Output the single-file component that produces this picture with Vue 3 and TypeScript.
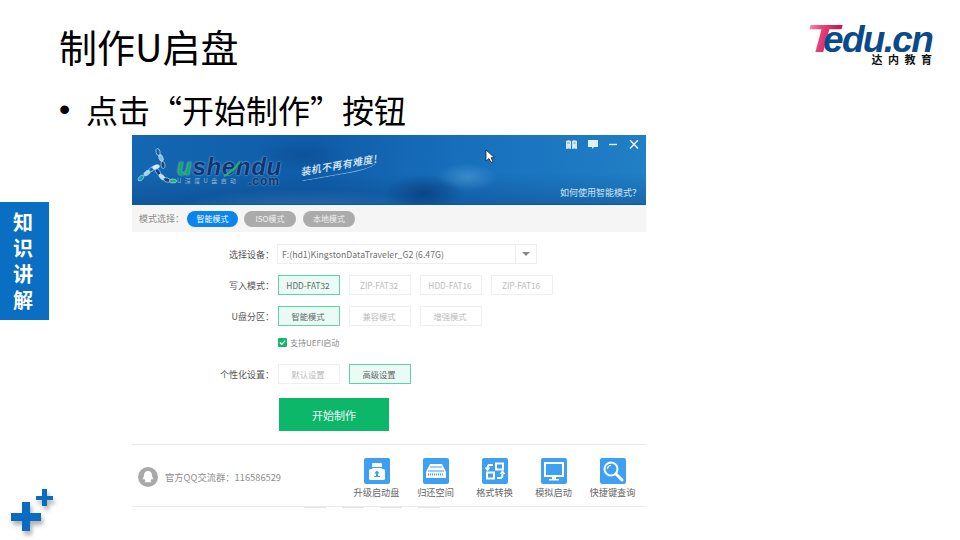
<script setup lang="ts">
interface Choice { text: string; on?: boolean }
interface Row { label: string; choices: Choice[] }
interface Bead { x: number; y: number; r: number; c: string }
const modes: Choice[] = [{ text: '智能模式', on: true }, { text: 'ISO模式' }, { text: '本地模式' }]
const writeRow: Row = { label: '写入模式：', choices: [{ text: 'HDD-FAT32', on: true }, { text: 'ZIP-FAT32' }, { text: 'HDD-FAT16' }, { text: 'ZIP-FAT16' }] }
const partRow: Row = { label: 'U盘分区：', choices: [{ text: '智能模式', on: true }, { text: '兼容模式' }, { text: '增强模式' }] }
const personalRow: Row = { label: '个性化设置：', choices: [{ text: '默认设置' }, { text: '高级设置', on: true }] }
const tools: string[] = ['升级启动盘', '归还空间', '格式转换', '模拟启动', '快捷键查询']
const beads: Bead[] = [
  { x: 21, y: 5, r: 75, c: '#1b5f9e' }, { x: 24, y: 11, r: 70, c: '#7cc0e6' }, { x: 26, y: 18, r: 85, c: '#14497f' },
  { x: 4, y: 31, r: -45, c: '#17a0a4' }, { x: 10, y: 26, r: -40, c: '#9fd6ee' }, { x: 15, y: 22, r: -35, c: '#1570a8' }, { x: 19, y: 20, r: -20, c: '#d3ecf8' },
  { x: 21, y: 25, r: 55, c: '#123f74' }, { x: 25, y: 30, r: 45, c: '#bfe2f4' }, { x: 30, y: 33, r: 20, c: '#123f74' }, { x: 36, y: 34, r: 0, c: '#1cb36a' }
]
const beadTransform = (b: Bead): string => `translate(${b.x} ${b.y}) rotate(${b.r})`
</script>

<template>
  <div class="slide">
    <header class="top">
      <h1 class="title">制作U启盘</h1>
      <div class="brand">
        <div class="brand-word"><span class="brand-t">T</span><span class="brand-rest">edu.cn</span></div>
        <div class="brand-cn">达内教育</div>
      </div>
    </header>
    <p class="bullet"><span class="dot">•</span>点击“开始制作”按钮</p>

    <div class="stage">
      <aside class="rail">
        <div class="tab"><span>知</span><span>识</span><span>讲</span><span>解</span></div>
        <svg class="plus" width="46" height="44" viewBox="0 0 46 44">
          <g fill="#0a6cc0">
            <path d="M12 14h8v11h11v8H20v10h-8V33H1v-8h11z" />
            <path d="M32 1h5v7h6v4h-6v6h-5v-6h-6V8h6z" />
          </g>
        </svg>
      </aside>

      <section class="app">
        <div class="banner">
          <div class="logo">
            <svg class="logo-mark" width="44" height="42" viewBox="0 0 44 42">
              <ellipse v-for="(b, i) in beads" :key="i" :transform="beadTransform(b)" rx="3.600" ry="2" :fill="b.c" stroke="#cfe8f6" stroke-width=".6" />
            </svg>
            <div class="logo-text">
              <div class="logo-word"><span class="logo-u">u</span>shendu</div>
              <div class="logo-sub"><span>U深度U盘启动</span><b>.com</b></div>
            </div>
          </div>
          <svg class="swoosh" width="20" height="18" viewBox="0 0 20 18"><path d="M2 16C8 14 13 8 18 2" stroke="#23b06a" stroke-width="2" fill="none" /></svg>
          <div class="slogan">装机不再有难度!</div>
          <svg class="cursor" width="10" height="15" viewBox="0 0 10 15">
            <path d="M1 1v11l3-2.500 2 4 2-1-2-3.800h3.500z" fill="#fff" stroke="#222" stroke-width=".8" />
          </svg>
          <div class="win">
            <svg width="11" height="9" viewBox="0 0 11 9"><path d="M0 1q3-1.500 5 0v8q-2-1-5 0zM6 1q2-1.500 5 0v8q-3-1-5 0z" fill="#d6e8f5" /><path d="M1 3h3M7 3h3" stroke="#5d9ccc" stroke-width=".8" /></svg>
            <svg width="10" height="9" viewBox="0 0 10 9"><path d="M0 0h10v7H6L4.500 9 4 7H0z" fill="#e2f0fa" /></svg>
            <svg width="9" height="9" viewBox="0 0 9 9"><path d="M0 4.500h8" stroke="#e2f0fa" stroke-width="1.400" /></svg>
            <svg width="10" height="9" viewBox="0 0 10 9"><path d="M1 0l8 8.500M9 0L1 8.500" stroke="#f2f8fc" stroke-width="1.400" /></svg>
          </div>
          <a class="howto">如何使用智能模式？</a>
        </div>

        <div class="modebar">
          <span class="modebar-label">模式选择：</span>
          <span v-for="m in modes" :key="m.text" class="pill" :class="{ 'pill-on': m.on }">{{ m.text }}</span>
        </div>

        <div class="form">
          <div class="row row-device">
            <label class="lab">选择设备：</label>
            <div class="select">
              <span class="select-text">F:(hd1)KingstonDataTraveler_G2 (6.47G)</span>
              <span class="select-arrow"><i></i></span>
            </div>
          </div>
          <div class="row row-write">
            <label class="lab">{{ writeRow.label }}</label>
            <span v-for="c in writeRow.choices" :key="c.text" class="opt" :class="{ 'opt-on': c.on }">{{ c.text }}</span>
          </div>
          <div class="row row-part">
            <label class="lab">{{ partRow.label }}</label>
            <span v-for="c in partRow.choices" :key="c.text" class="opt" :class="{ 'opt-on': c.on }">{{ c.text }}</span>
          </div>
          <div class="uefi">
            <svg width="9" height="9" viewBox="0 0 10 10"><rect width="10" height="10" rx="1.500" fill="#12b76a" /><path d="M2 5l2.200 2.200L8 3" stroke="#fff" stroke-width="1.300" fill="none" /></svg>
            <span>支持UEFI启动</span>
          </div>
          <div class="row row-personal">
            <label class="lab">{{ personalRow.label }}</label>
            <span v-for="c in personalRow.choices" :key="c.text" class="opt" :class="{ 'opt-on': c.on }">{{ c.text }}</span>
          </div>
          <button class="start">开始制作</button>
        </div>

        <div class="foot">
          <div class="qq">
            <span class="qq-badge">
              <svg width="20" height="20" viewBox="0 0 20 20">
                <circle cx="10" cy="10" r="10" fill="#a9a9a9" />
                <path d="M10 4c-2.700 0-4 2-4 4.500 0 1-1 2.500-1.300 4 .5.300 1.200-.3 1.500-.8.300 1 1 1.800 1.500 2.300-.7.300-1.200.6-1 1 .6.300 3 .3 3.300 0 .3.300 2.700.3 3.300 0 .2-.4-.3-.7-1-1 .5-.5 1.200-1.300 1.500-2.300.3.500 1 1.100 1.500.8-.3-1.500-1.300-3-1.300-4C14 6 12.700 4 10 4z" fill="#fff" />
              </svg>
            </span>
            <span class="qq-text">官方QQ交流群：116586529</span>
          </div>
          <div class="tools">
            <div v-for="(t, i) in tools" :key="t" class="tool">
              <span class="tool-icon">
                <svg width="26" height="26" viewBox="0 0 26 26">
                  <rect width="26" height="26" rx="2" fill="#3f9ff0" />
                  <g v-if="i === 0" fill="#fff">
                    <rect x="8" y="5" width="10" height="6" rx="1" />
                    <path d="M8 9h10v1H8z" fill="#3f9ff0" />
                    <rect x="5" y="11" width="16" height="11" rx="1.500" />
                    <path d="M13 12.500l2.500 3h-1.500v2.500h2v1h-6v-1h2v-2.500H10z" fill="#3f9ff0" />
                  </g>
                  <g v-else-if="i === 1">
                    <path d="M7 6h12l4 8v6H3v-6z" fill="#fff" />
                    <path d="M7 9h12M5 13h16" stroke="#3f9ff0" stroke-width="1" />
                    <path d="M5 16.500h16" stroke="#3f9ff0" stroke-width="2" stroke-dasharray="1 1" />
                  </g>
                  <g v-else-if="i === 2" fill="none" stroke="#fff" stroke-width="2">
                    <rect x="14" y="5.500" width="7" height="6" />
                    <rect x="5" y="14.500" width="7" height="6" />
                    <path d="M11 7H7.500C6 7 5.500 8 5.500 11M15 20h3.500c1.500 0 2-1 2-4.500" />
                    <path d="M3.500 9.500l2 2.500 2-2.500M18.500 16l2-2.500 2 2.500" stroke-width="1.500" />
                  </g>
                  <g v-else-if="i === 3" fill="#fff">
                    <path d="M3 4h20v15H3zM5 6v11h16V6z" fill-rule="evenodd" />
                    <rect x="11" y="19" width="4" height="2" />
                    <rect x="8" y="21" width="10" height="1.500" />
                  </g>
                  <g v-else fill="none" stroke="#fff">
                    <circle cx="11" cy="11" r="6.500" stroke-width="2" />
                    <path d="M7.500 11c0-2 1.500-3.500 3.500-3.500" stroke-width="1.200" />
                    <path d="M16 16l6 6" stroke-width="3" stroke-linecap="round" />
                  </g>
                </svg>
              </span>
              <span class="tool-label">{{ t }}</span>
            </div>
          </div>
        </div>
        <div class="trace"><i></i><i></i><i></i><i></i></div>
      </section>
    </div>
  </div>
</template>

<style>
html, body { margin: 0; background: #fff; }
</style>

<style scoped>
.slide {
  width: 960px;
  height: 540px;
  overflow: hidden;
  background: #fff;
  color: #000;
  font-family: "Noto Sans CJK SC", "Noto Sans", sans-serif;
  display: flex;
  flex-direction: column;
}
.top {
  display: flex;
  justify-content: space-between;
  align-items: flex-start;
  height: 87px;
  padding: 0 28px 0 59px;
  flex: none;
}
.title {
  margin: 19px 0 0;
  font-size: 38px;
  font-weight: 400;
  line-height: 54px;
  letter-spacing: 0;
}
.brand {
  margin-top: 25px;
  width: 128px;
  display: flex;
  flex-direction: column;
  align-items: flex-end;
}
.brand-word {
  font-family: "Liberation Sans", sans-serif;
  font-weight: 700;
  font-style: italic;
  font-size: 37px;
  line-height: 28px;
  letter-spacing: -1.700px;
  color: #0b4a8a;
  width: 128px;
  white-space: nowrap;
}
.brand-t {
  display: inline-block;
  width: 30px;
  margin-right: -11px;
  padding-left: 1px;
  box-sizing: border-box;
  font-size: 39px;
  line-height: 28px;
  transform: scaleX(1.4);
  transform-origin: left center;
  color: #d92c63;
  background: linear-gradient(100deg, #f5b0c4 0%, #e8487c 35%, #c81c54 70%);
  -webkit-background-clip: text;
  background-clip: text;
  -webkit-text-fill-color: transparent;
}
.brand-rest { position: relative; }
.brand-cn {
  font-size: 11px;
  line-height: 10px;
  font-weight: 700;
  letter-spacing: 5.500px;
  margin-right: -5.500px;
  color: #111;
}
.bullet {
  margin: 0;
  height: 48px;
  flex: none;
  padding-left: 59px;
  font-size: 32px;
  line-height: 44px;
  white-space: nowrap;
  display: flex;
}
.dot {
  width: 27px;
  font-family: "Liberation Sans", sans-serif;
}
.stage {
  flex: 1;
  display: flex;
  min-height: 0;
}
.rail {
  width: 132px;
  flex: none;
  display: flex;
  flex-direction: column;
  align-items: flex-start;
}
.tab {
  margin-top: 67px;
  width: 49px;
  height: 118px;
  box-sizing: border-box;
  padding-right: 3px;
  background: #0a6fc2;
  color: #fff;
  font-weight: 700;
  font-size: 20px;
  line-height: 26px;
  display: flex;
  flex-direction: column;
  align-items: center;
  justify-content: center;
}
.plus {
  margin: 168px 0 0 10px;
  filter: drop-shadow(2px 4px 2px rgba(0, 0, 0, .3));
}
.app {
  width: 514px;
  flex: none;
  font-size: 10px;
  position: relative;
}
.banner {
  position: relative;
  height: 70px;
  box-sizing: border-box;
  border-bottom: 1px solid #0c5a9c;
  background:
    radial-gradient(ellipse 40px 18px at 292px 58px, rgba(6, 58, 120, .7), transparent),
    radial-gradient(ellipse 30px 14px at 335px 42px, rgba(120, 190, 230, .35), transparent),
    radial-gradient(ellipse 130px 22px at 170px 76px, rgba(110, 170, 220, .35), transparent),
    radial-gradient(ellipse 45px 16px at 170px 20px, rgba(10, 70, 135, .45), transparent),
    linear-gradient(180deg, transparent 55%, rgba(8, 50, 110, .3) 100%),
    linear-gradient(100deg, #1467b2 0%, #0f5ca8 35%, #1870bd 65%, #2180c6 100%);
}
.logo {
  position: absolute;
  left: 5px;
  top: 12px;
  display: flex;
  align-items: flex-start;
}
.logo-mark { flex: none; }
.logo-text { margin-left: -4px; margin-top: 10px; }
.logo-word {
  font-family: "Liberation Sans", sans-serif;
  font-style: italic;
  font-weight: 700;
  font-size: 24px;
  line-height: 20px;
  letter-spacing: .7px;
  color: #0a3675;
  text-shadow: 0 0 2px rgba(225, 240, 250, .75);
  white-space: nowrap;
}
.logo-u { color: #16a869; }
.logo-sub {
  display: flex;
  align-items: center;
  justify-content: space-between;
  width: 103px;
  height: 8px;
  font-size: 6px;
  line-height: 8px;
  color: #8db6da;
  white-space: nowrap;
  letter-spacing: 3.400px;
}
.logo-sub b {
  font-family: "Liberation Sans", sans-serif;
  font-size: 12px;
  font-weight: 700;
  color: #0a3675;
  text-shadow: 0 0 2px rgba(225, 240, 250, .6);
  letter-spacing: 1px;
}
.swoosh {
  position: absolute;
  left: 90px;
  top: 25px;
}
.slogan {
  position: absolute;
  left: 168px;
  top: 23px;
  transform: rotate(-10deg);
  color: #e2eff8;
  font-size: 10px;
  font-style: italic;
  font-weight: 500;
  letter-spacing: .5px;
  line-height: 14px;
  border-bottom: 1px solid rgba(190, 225, 245, .55);
  border-radius: 0 0 40% 0;
  padding-bottom: 2px;
  white-space: nowrap;
}
.cursor {
  position: absolute;
  left: 353px;
  top: 14px;
}
.win {
  position: absolute;
  right: 7px;
  top: 5px;
  display: flex;
  gap: 11px;
  align-items: center;
}
.howto {
  position: absolute;
  right: 5px;
  bottom: 4px;
  font-size: 9px;
  line-height: 14px;
  color: #cfe5f5;
  white-space: nowrap;
}
.modebar {
  height: 27px;
  background: #f5f5f5;
  display: flex;
  align-items: center;
  padding-left: 7px;
  color: #8a8a8a;
  font-size: 9px;
  box-sizing: border-box;
}
.modebar-label { width: 48px; white-space: nowrap; }
.pill {
  width: 52px;
  height: 16px;
  margin-right: 7px;
  border-radius: 8px;
  background: #ababab;
  color: #f1f1f1;
  display: flex;
  align-items: center;
  justify-content: center;
  font-size: 8px;
}
.pill-on { background: #0a84ee; color: #fff; width: 51px; margin-right: 6px; }
.form {
  height: 213px;
  box-sizing: border-box;
  padding-top: 12px;
  border-bottom: 1px solid #e8e8e8;
  display: flex;
  flex-direction: column;
}
.row {
  display: flex;
  align-items: center;
  height: 20px;
  flex: none;
}
.row-write { margin-top: 11px; }
.row-part { margin-top: 11px; }
.row-personal { margin-top: 16px; }
.lab {
  width: 146px;
  padding-right: 4px;
  box-sizing: border-box;
  flex: none;
  text-align: right;
  font-size: 9px;
  color: #555;
  white-space: nowrap;
}
.select {
  width: 260px;
  height: 20px;
  margin-left: -1px;
  box-sizing: border-box;
  border: 1px solid #eee;
  display: flex;
  align-items: center;
  color: #6f6f6f;
  font-size: 8.700px;
}
.select-text { flex: 1; padding-left: 4px; white-space: nowrap; }
.select-arrow {
  width: 20px;
  height: 18px;
  border-left: 1px solid #eee;
  display: flex;
  align-items: center;
  justify-content: center;
}
.select-arrow i {
  width: 0;
  height: 0;
  border: 4px solid transparent;
  border-top: 4px solid #888;
  border-bottom: 0;
}
.opt {
  width: 62px;
  height: 20px;
  box-sizing: border-box;
  margin-right: 9px;
  padding-right: 2px;
  border: 1px solid #efefef;
  display: flex;
  align-items: center;
  justify-content: center;
  color: #bbb;
  font-size: 8.300px;
  white-space: nowrap;
}
.opt-on {
  border: 1px solid #5fd3a6;
  background: #e9fbf4;
  color: #666;
}
.uefi {
  margin: 10px 0 0 146px;
  height: 12px;
  display: flex;
  align-items: center;
  gap: 3px;
  color: #8a8a8a;
  font-size: 8px;
  flex: none;
}
.start {
  width: 110px;
  height: 33px;
  margin: 14px 0 0 147px;
  flex: none;
  border: 0;
  padding: 0;
  background: #0db76a;
  color: #f0fbf6;
  font: inherit;
  font-size: 11px;
}
.foot {
  height: 62px;
  box-sizing: border-box;
  border-bottom: 1px solid #ececec;
  display: flex;
  justify-content: space-between;
  padding: 13px 4px 0 6px;
}
.qq {
  display: flex;
  align-items: flex-start;
  gap: 7px;
  color: #8d8d8d;
  font-size: 9.300px;
  padding-top: 9px;
}
.qq-badge { display: block; height: 20px; }
.qq-text { line-height: 20px; white-space: nowrap; }
.tools { display: flex; }
.tool {
  width: 59px;
  display: flex;
  flex-direction: column;
  align-items: center;
  gap: 1px;
  color: #666;
  font-size: 9.200px;
}
.tool-icon { height: 26px; }
.tool-icon svg { display: block; }
.tool-label { line-height: 14px; white-space: nowrap; }
.trace {
  display: flex;
  gap: 16px;
  padding-left: 172px;
  height: 2px;
}
.trace i {
  width: 22px;
  height: 1px;
  background: #e2e2e2;
}
</style>
